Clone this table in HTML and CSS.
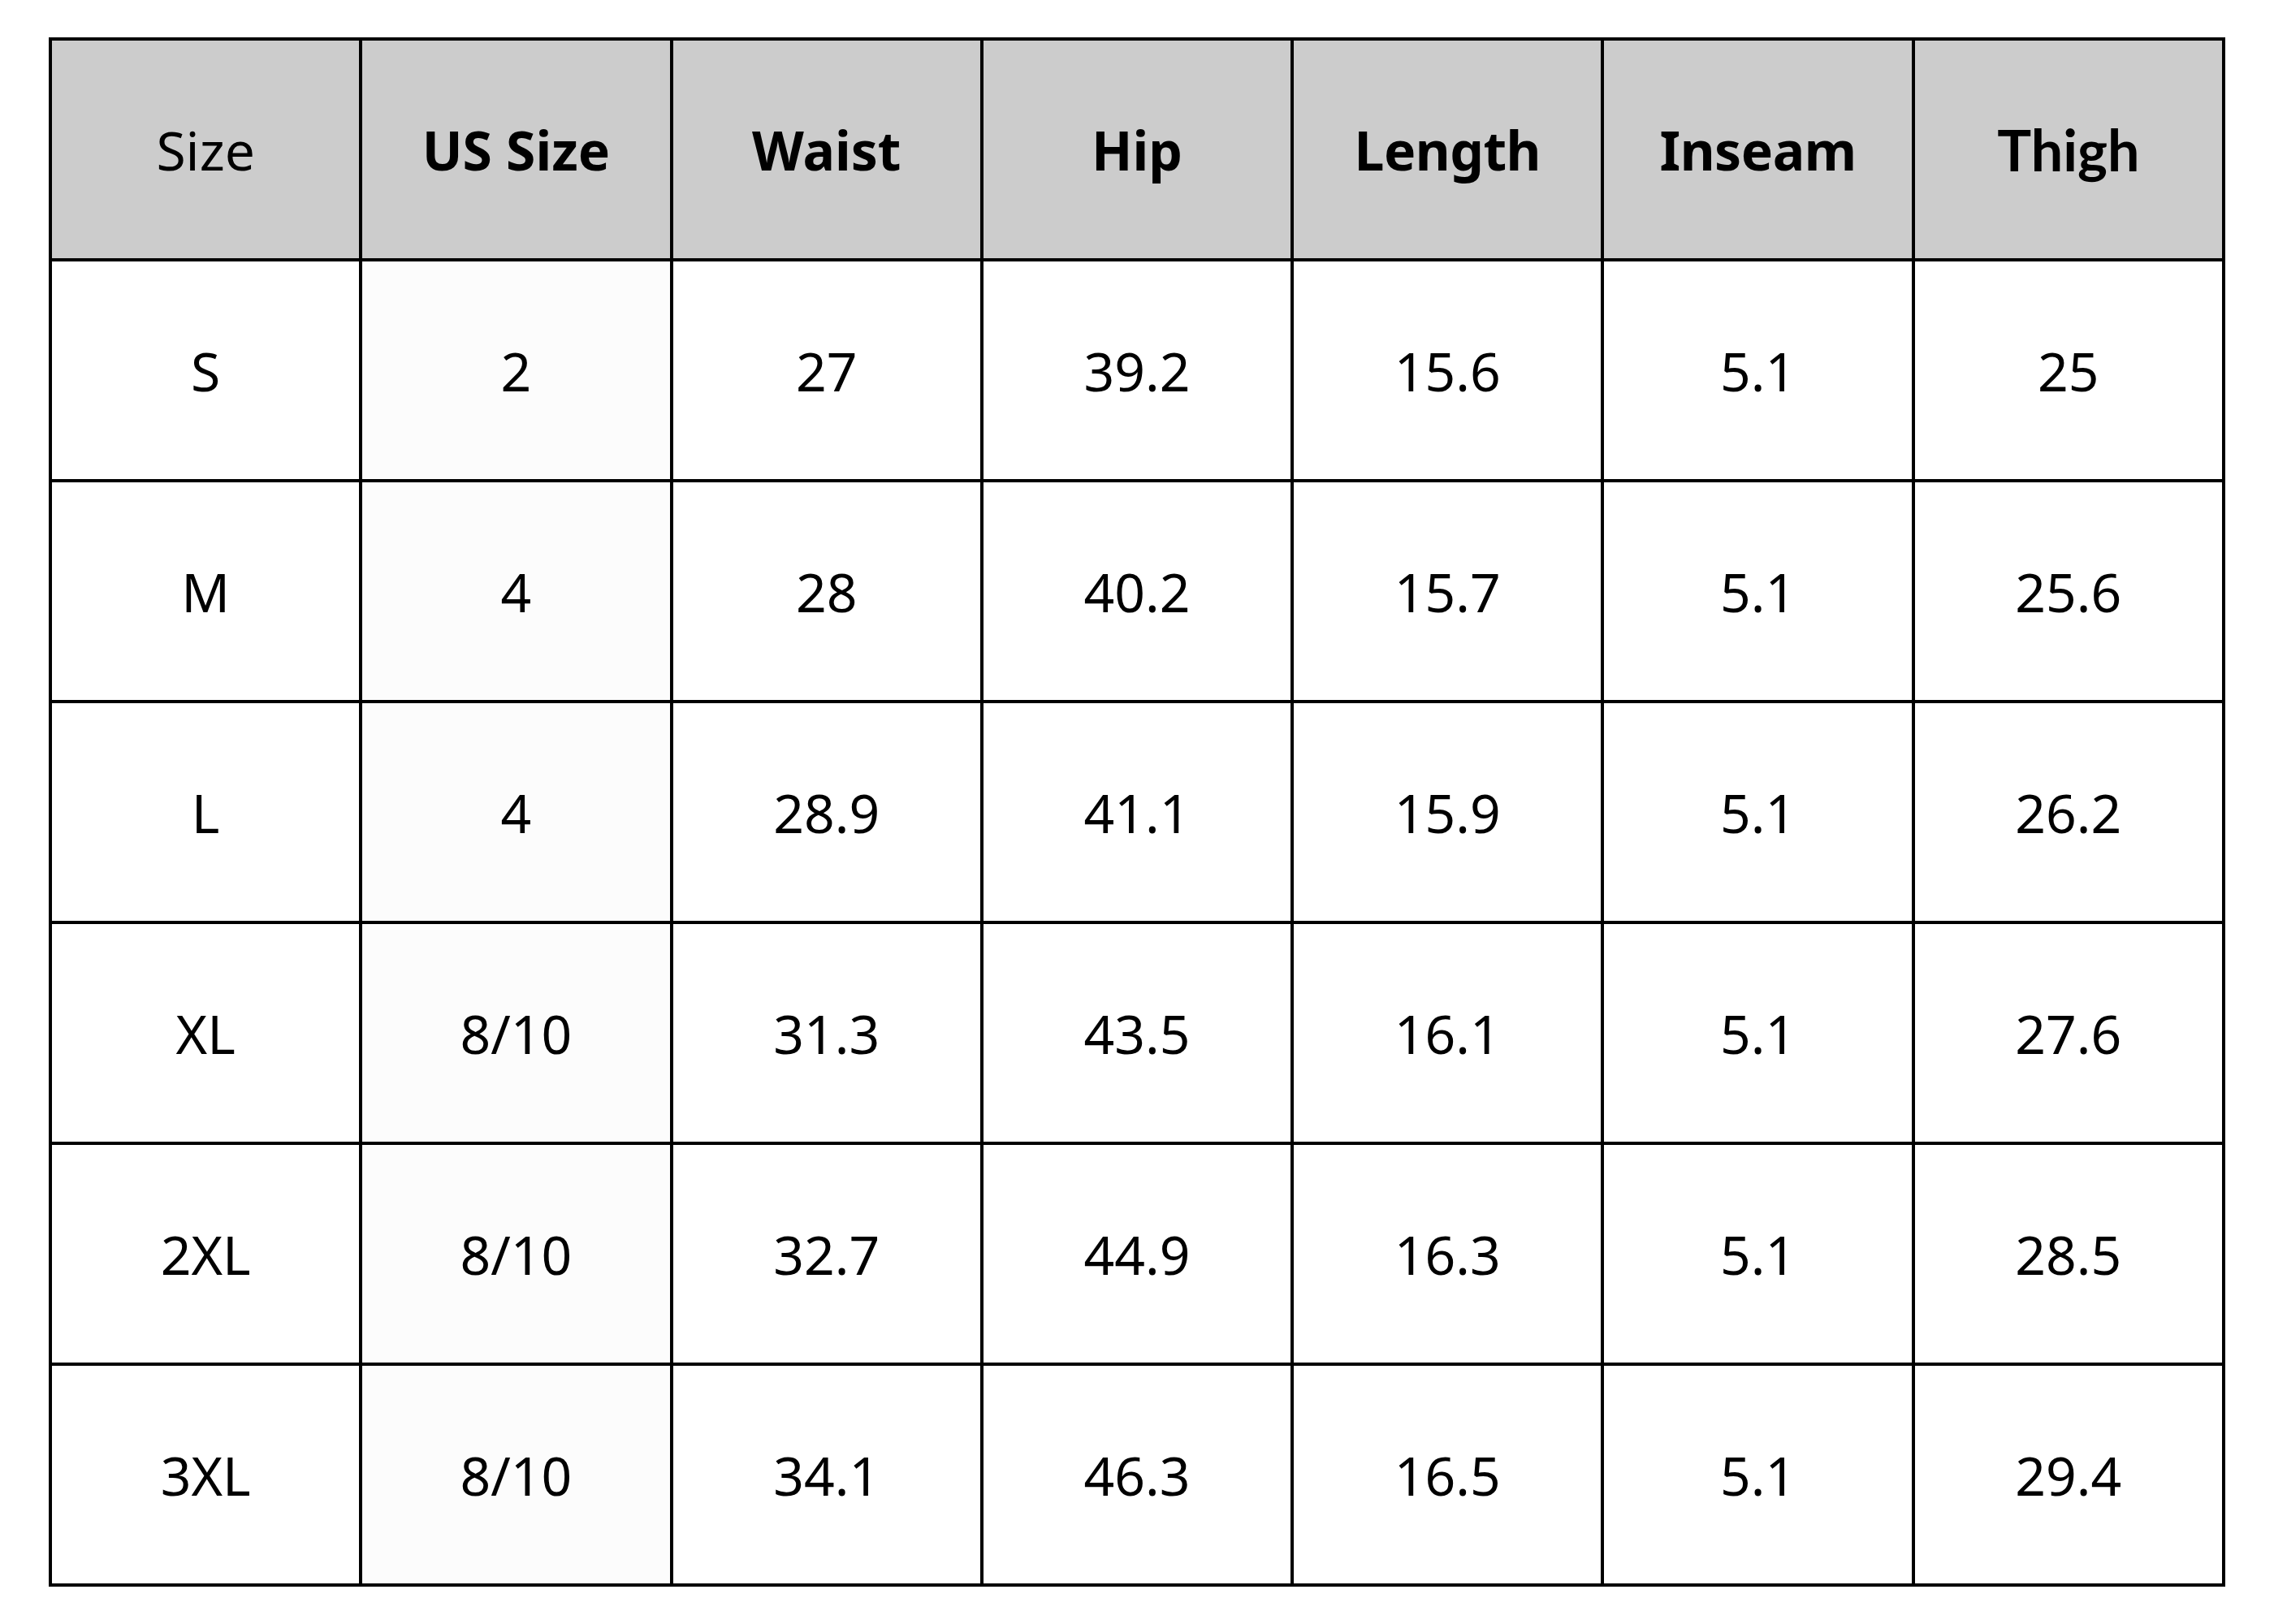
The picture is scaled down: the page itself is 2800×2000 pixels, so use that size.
FILE: index.html
```html
<!DOCTYPE html>
<html>
<head>
<meta charset="utf-8">
<link rel="stylesheet" href="styles.css">
</head>
<body>
<table class="chart">
  <thead>
    <tr>
      <th class="plain">Size</th>
      <th>US Size</th>
      <th>Waist</th>
      <th>Hip</th>
      <th class="cond">Length</th>
      <th class="cond">Inseam</th>
      <th class="lato">Thigh</th>
    </tr>
  </thead>
  <tbody>
    <tr><td>S</td><td class="us">2</td><td>27</td><td>39.2</td><td>15.6</td><td>5.1</td><td>25</td></tr>
    <tr><td>M</td><td class="us">4</td><td>28</td><td>40.2</td><td>15.7</td><td>5.1</td><td>25.6</td></tr>
    <tr><td>L</td><td class="us">4</td><td>28.9</td><td>41.1</td><td>15.9</td><td>5.1</td><td>26.2</td></tr>
    <tr><td>XL</td><td class="us">8/10</td><td>31.3</td><td>43.5</td><td>16.1</td><td>5.1</td><td>27.6</td></tr>
    <tr><td>2XL</td><td class="us">8/10</td><td>32.7</td><td>44.9</td><td>16.3</td><td>5.1</td><td>28.5</td></tr>
    <tr><td>3XL</td><td class="us">8/10</td><td>34.1</td><td>46.3</td><td>16.5</td><td>5.1</td><td>29.4</td></tr>
  </tbody>
</table>
</body>
</html>
```

FILE: styles.css
```css
html, body {
  margin: 0;
  padding: 0;
  background: #ffffff;
}

body {
  padding: 46px 0 0 60px;
}

.chart {
  border-collapse: collapse;
  table-layout: fixed;
  width: 2680px;
  font-family: "Noto Sans", "Open Sans", sans-serif;
  color: #000000;
}

.chart th,
.chart td {
  border: 4px solid #000000;
  height: 268px;
  padding: 0;
  text-align: center;
  vertical-align: middle;
  font-size: 66px;
  line-height: 1;
}

.chart th {
  background: #cccccc;
  font-weight: 700;
}

.chart th.plain {
  font-weight: 400;
}

.chart th.cond {
  letter-spacing: -0.5px;
}

.chart th.lato {
  font-family: "Lato", "Noto Sans", sans-serif;
  font-weight: 700;
  font-size: 70px;
}

.chart td {
  font-weight: 400;
  background: #ffffff;
}

.chart td.us {
  background: #fcfcfc;
}
```
